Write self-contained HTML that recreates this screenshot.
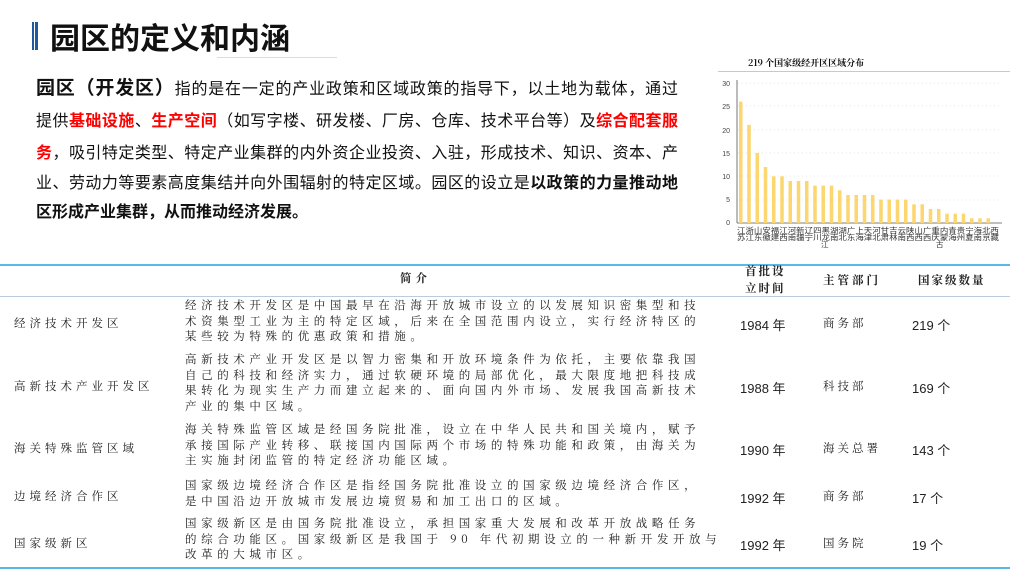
<!DOCTYPE html>
<html><head><meta charset="utf-8"><style>
*{margin:0;padding:0;box-sizing:border-box}
body{width:1024px;height:575px;background:#fff;position:relative;overflow:hidden;font-family:"Liberation Sans","Noto Sans CJK SC",sans-serif;color:#111}
.a{position:absolute}
.t{font-size:30px;font-weight:bold;left:50px;top:14px}
.p div{position:absolute;left:36px;width:642px;font-size:16px;text-align:justify;text-align-last:justify;white-space:nowrap;line-height:20px}
.r{color:#f00;font-weight:bold}
.b{font-weight:bold}
.tb{font-family:"Noto Serif CJK SC","Liberation Serif",serif;font-size:11.5px;color:#222}
.d{position:absolute;left:185px;width:537px;line-height:15.5px;letter-spacing:4.6px;white-space:nowrap}
.d span{display:block}
.n{position:absolute;left:14px;letter-spacing:4px}
.y{position:absolute;left:740px;font-family:"Liberation Sans","Noto Sans CJK SC",sans-serif;font-size:13px}
.m{position:absolute;left:823px;letter-spacing:3px}
.c{position:absolute;left:912px;font-family:"Liberation Sans","Noto Sans CJK SC",sans-serif;font-size:13px}
</style></head><body>
<div class="a" style="left:32px;top:22px;width:2px;height:28px;background:#1f5aa0"></div>
<div class="a" style="left:35px;top:22px;width:3px;height:28px;background:#1f5aa0"></div>
<div class="a t">园区的定义和内涵</div>
<div class="a" style="left:217px;top:57px;width:120px;height:1px;background:#ddd"></div>
<div class="p">
<div style="top:79px"><span class="b" style="font-size:19px">园区（开发区）</span>指的是在一定的产业政策和区域政策的指导下，以土地为载体，通过</div>
<div style="top:112px">提供<span class="r">基础设施</span>、<span class="r">生产空间</span>（如写字楼、研发楼、厂房、仓库、技术平台等）及<span class="r">综合配套服</span></div>
<div style="top:144px"><span class="r">务</span>，吸引特定类型、特定产业集群的内外资企业投资、入驻，形成技术、知识、资本、产</div>
<div style="top:174px">业、劳动力等要素高度集结并向外围辐射的特定区域。园区的设立是<span class="b">以政策的力量推动地</span></div>
<div style="top:203px;text-align-last:left"><span class="b">区形成产业集群，从而推动经济发展。</span></div>
</div>
<div class="a b" style="left:748px;top:56px;font-size:9px;font-family:'Noto Serif CJK SC',serif">219 个国家级经开区区域分布</div>
<div class="a" style="left:718px;top:71px;width:292px;height:1px;background:#d8c9a0"></div>
<svg class="a" style="left:710px;top:74px" width="300" height="180">
<g font-family="Liberation Sans" font-size="7" fill="#444" text-anchor="end">
<text x="20" y="12">30</text><text x="20" y="35">25</text><text x="20" y="59">20</text><text x="20" y="82">15</text><text x="20" y="105">10</text><text x="20" y="128">5</text><text x="20" y="151">0</text></g>
<g stroke="#ccc" stroke-width="0.6" stroke-dasharray="1,3">
<line x1="28" y1="9" x2="292" y2="9"/><line x1="28" y1="32" x2="292" y2="32"/><line x1="28" y1="56" x2="292" y2="56"/><line x1="28" y1="79" x2="292" y2="79"/><line x1="28" y1="102" x2="292" y2="102"/><line x1="28" y1="126" x2="292" y2="126"/></g>
<line x1="27" y1="6" x2="27" y2="149" stroke="#555" stroke-width="0.8"/>
<line x1="27" y1="149" x2="292" y2="149" stroke="#555" stroke-width="0.8"/>
<g fill="#fcd66e" transform="translate(0,149) scale(1,-1)">
<rect x="29" width="3.5" height="121.4"/><rect x="37.25" width="3.5" height="98.1"/><rect x="45.5" width="3.5" height="70.1"/><rect x="53.75" width="3.5" height="56"/><rect x="62" width="3.5" height="46.7"/><rect x="70.25" width="3.5" height="46.7"/><rect x="78.5" width="3.5" height="42"/><rect x="86.75" width="3.5" height="42"/><rect x="95" width="3.5" height="42"/><rect x="103.25" width="3.5" height="37.4"/><rect x="111.5" width="3.5" height="37.4"/><rect x="119.75" width="3.5" height="37.4"/><rect x="128" width="3.5" height="32.7"/><rect x="136.25" width="3.5" height="28"/><rect x="144.5" width="3.5" height="28"/><rect x="152.75" width="3.5" height="28"/><rect x="161" width="3.5" height="28"/><rect x="169.25" width="3.5" height="23.4"/><rect x="177.5" width="3.5" height="23.4"/><rect x="185.75" width="3.5" height="23.4"/><rect x="194" width="3.5" height="23.4"/><rect x="202.25" width="3.5" height="18.7"/><rect x="210.5" width="3.5" height="18.7"/><rect x="218.75" width="3.5" height="14"/><rect x="227" width="3.5" height="14"/><rect x="235.25" width="3.5" height="9.3"/><rect x="243.5" width="3.5" height="9.3"/><rect x="251.75" width="3.5" height="9.3"/><rect x="260" width="3.5" height="4.7"/><rect x="268.25" width="3.5" height="4.7"/><rect x="276.5" width="3.5" height="4.7"/>
</g>
<g font-family="Noto Sans CJK SC" font-size="7.5" fill="#333">
<text x="27" y="159" textLength="262" lengthAdjust="spacingAndGlyphs">江浙山安福江河新辽四黑湖湖广上天河甘吉云陕山广重内青贵宁海北西</text>
<text x="27" y="166" textLength="262" lengthAdjust="spacingAndGlyphs">苏江东徽建西南疆宁川龙南北东海津北肃林南西西西庆蒙海州夏南京藏</text>
<text x="111" y="173">江</text><text x="226" y="173">古</text>
</g>
</svg>
<div class="a" style="left:0;top:264px;width:1010px;height:2px;background:#5ab8e6"></div>
<div class="a" style="left:0;top:296px;width:1010px;height:1px;background:#bcd"></div>
<div class="a" style="left:0;top:567px;width:1010px;height:2px;background:#5ab8e6"></div>
<div class="tb">
<div class="a b" style="left:400px;top:270px;letter-spacing:4px">简介</div>
<div class="a b" style="left:745px;top:263px;line-height:17px;letter-spacing:2px">首批设<br>立时间</div>
<div class="a b" style="left:823px;top:272px;letter-spacing:3px">主管部门</div>
<div class="a b" style="left:918px;top:272px;letter-spacing:2px">国家级数量</div>

<div class="d" style="top:298px"><span>经济技术开发区是中国最早在沿海开放城市设立的以发展知识密集型和技</span><span>术资集型工业为主的特定区域，后来在全国范围内设立，实行经济特区的</span><span>某些较为特殊的优惠政策和措施。</span></div>
<div class="n" style="top:315px">经济技术开发区</div><div class="y" style="top:315px">1984 年</div><div class="m" style="top:315px">商务部</div><div class="c" style="top:315px">219 个</div>

<div class="d" style="top:352px"><span>高新技术产业开发区是以智力密集和开放环境条件为依托，主要依靠我国</span><span>自己的科技和经济实力，通过软硬环境的局部优化，最大限度地把科技成</span><span>果转化为现实生产力而建立起来的、面向国内外市场、发展我国高新技术</span><span>产业的集中区域。</span></div>
<div class="n" style="top:378px">高新技术产业开发区</div><div class="y" style="top:378px">1988 年</div><div class="m" style="top:378px">科技部</div><div class="c" style="top:378px">169 个</div>

<div class="d" style="top:422px"><span>海关特殊监管区域是经国务院批准，设立在中华人民共和国关境内，赋予</span><span>承接国际产业转移、联接国内国际两个市场的特殊功能和政策，由海关为</span><span>主实施封闭监管的特定经济功能区域。</span></div>
<div class="n" style="top:440px">海关特殊监管区域</div><div class="y" style="top:440px">1990 年</div><div class="m" style="top:440px">海关总署</div><div class="c" style="top:440px">143 个</div>

<div class="d" style="top:478px"><span>国家级边境经济合作区是指经国务院批准设立的国家级边境经济合作区，</span><span>是中国沿边开放城市发展边境贸易和加工出口的区域。</span></div>
<div class="n" style="top:488px">边境经济合作区</div><div class="y" style="top:488px">1992 年</div><div class="m" style="top:488px">商务部</div><div class="c" style="top:488px">17 个</div>

<div class="d" style="top:516px"><span>国家级新区是由国务院批准设立，承担国家重大发展和改革开放战略任务</span><span>的综合功能区。国家级新区是我国于 90 年代初期设立的一种新开发开放与</span><span>改革的大城市区。</span></div>
<div class="n" style="top:535px">国家级新区</div><div class="y" style="top:535px">1992 年</div><div class="m" style="top:535px">国务院</div><div class="c" style="top:535px">19 个</div>
</div>
</body></html>
